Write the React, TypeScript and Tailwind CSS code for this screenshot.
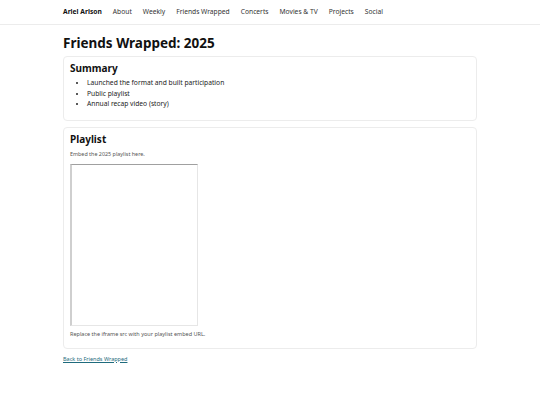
export default function App() {
  const nav = ["About", "Weekly", "Friends Wrapped", "Concerts", "Movies & TV", "Projects", "Social"];

  return (
    <div className="min-h-[405px] bg-white text-[#111] font-['Noto_Sans',sans-serif]">
      {/* Header */}
      <header className="h-[25px] border-b border-[#ececec]">
        <nav className="mx-auto flex h-full w-[414px] items-center gap-[11px] pt-[1px] text-[6.7px]">
          <span className="font-bold text-[#111]">Ariel Arison</span>
          {nav.map((item) => (
            <a key={item} href="#" className="text-[#333]">
              {item}
            </a>
          ))}
        </nav>
      </header>

      <main className="mx-auto w-[414px] pt-[7px]">
        <h1 className="text-[13.5px] font-bold leading-[22px]">Friends Wrapped: 2025</h1>

        {/* Summary */}
        <section className="mt-[2px] rounded-[4px] border border-[#ececec] px-[6px] pt-[3px] pb-[10px]">
          <h2 className="text-[10px] font-bold leading-[16px]">Summary</h2>
          <ul className="mt-[2px] list-disc pl-[17px] text-[6.7px] leading-[10.5px] text-[#222]">
            <li>Launched the format and built participation</li>
            <li>Public playlist</li>
            <li>Annual recap video (story)</li>
          </ul>
        </section>

        {/* Playlist */}
        <section className="mt-[6px] rounded-[4px] border border-[#ececec] px-[6px] pt-[3px] pb-[10px]">
          <h2 className="text-[10px] font-bold leading-[16px]">Playlist</h2>
          <p className="mt-[3px] text-[5.4px] leading-[8px] text-[#555]">Embed the 2025 playlist here.</p>
          <div className="mt-[6px] h-[162px] w-[128px] border border-t-[#a0a0a0] border-l-2 border-l-[#cfcfcf] border-r-[#e6e6e6] border-b-[#e6e6e6]" />
          <p className="mt-[4px] text-[5.5px] leading-[8px] text-[#555]">
            Replace the iframe src with your playlist embed URL.
          </p>
        </section>

        <a href="#" className="mt-[6px] block w-fit text-[5.5px] leading-[8px] text-[#1f6b7d] underline">
          Back to Friends Wrapped
        </a>
      </main>
    </div>
  );
}
